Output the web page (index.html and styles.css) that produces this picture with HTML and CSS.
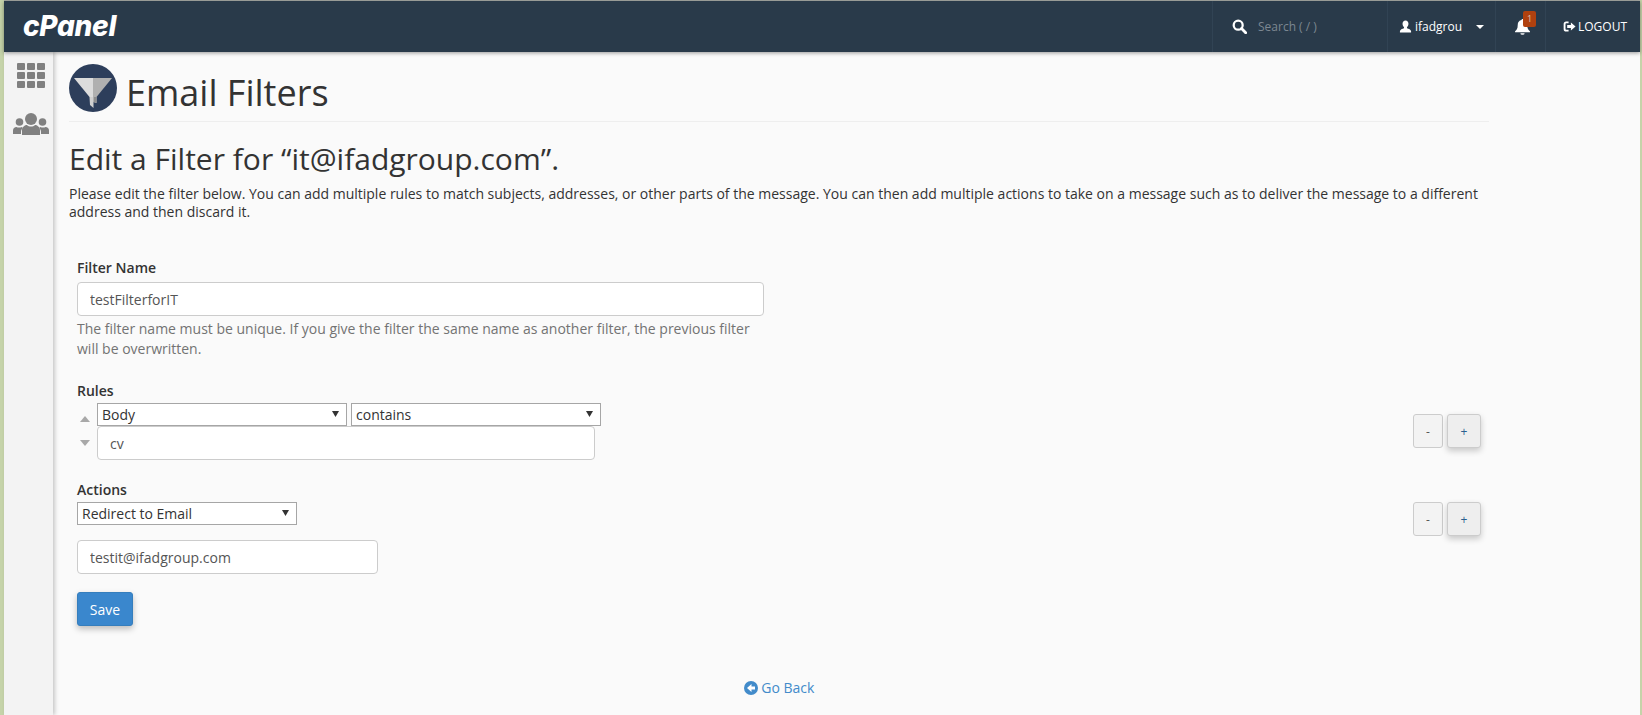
FILE: index.html
```html
<!DOCTYPE html>
<html lang="en">
<head>
    <meta charset="UTF-8">
    <meta name="viewport" content="width=device-width, initial-scale=1.0">
    <title>Email Filters</title>
    <link rel="stylesheet" href="styles.css">
</head>
<body>
    <div class="window">
        <header class="topbar">
            <a class="logo">cPanel</a>
            <div class="top-items">
                <div class="top-search">
                    <svg class="search-icon" viewBox="0 0 16 16"><circle cx="6.6" cy="6.6" r="4.8" fill="none" stroke="#fff" stroke-width="2.4"/><path d="M10.2 10.2 L14.6 14.6" stroke="#fff" stroke-width="3" stroke-linecap="round"/></svg>
                    <span class="search-text">Search ( / )</span>
                </div>
                <div class="top-user">
                    <svg class="user-icon" viewBox="0 0 14 14"><path d="M7 0.5c2 0 3.2 1.5 3.2 3.6 0 1.6-.7 3-1.6 3.7v1.1c1.8.7 4.4 1.4 4.4 3.2V13.500H1v-1.400c0-1.800 2.600-2.500 4.400-3.200V7.800C4.500 7.100 3.800 5.700 3.800 4.100 3.800 2 5 .5 7 .5z" fill="#fff"/></svg>
                    <span>ifadgrou</span>
                    <span class="caret"></span>
                </div>
                <div class="top-bell">
                    <svg class="bell-icon" viewBox="0 0 16 16"><path d="M8 1c.5 0 .9.400.9.900 2.300.400 3.600 2.200 3.600 4.600 0 3.500 1 4.800 2.500 6V13.500H1v-1c1.500-1.200 2.500-2.500 2.500-6 0-2.400 1.300-4.200 3.600-4.600C7.100 1.400 7.500 1 8 1z" fill="#fff"/><path d="M6 14.300h4a2 1.500 0 0 1-4 0z" fill="#fff"/></svg>
                    <span class="badge">1</span>
                </div>
                <div class="top-logout">
                    <svg class="logout-icon" viewBox="0 0 14 14"><path d="M6 2.500H3.500A1.800 1.800 0 0 0 1.700 4.300v5.400a1.800 1.800 0 0 0 1.800 1.800H6" fill="none" stroke="#fff" stroke-width="2"/><path d="M4.500 5.500H8.500V2.800L13.500 7 8.500 11.200V8.500H4.500z" fill="#fff"/></svg>
                    <span>LOGOUT</span>
                </div>
            </div>
        </header>

        <div class="columns">
            <nav class="sidebar">
                <svg class="grid-icon" viewBox="0 0 28 25">
                    <rect x="0" y="0" width="8" height="7" rx="1"/><rect x="10" y="0" width="8" height="7" rx="1"/><rect x="20" y="0" width="8" height="7" rx="1"/>
                    <rect x="0" y="9" width="8" height="7" rx="1"/><rect x="10" y="9" width="8" height="7" rx="1"/><rect x="20" y="9" width="8" height="7" rx="1"/>
                    <rect x="0" y="18" width="8" height="7" rx="1"/><rect x="10" y="18" width="8" height="7" rx="1"/><rect x="20" y="18" width="8" height="7" rx="1"/>
                </svg>
                <svg class="users-icon" viewBox="0 0 36 22">
                    <circle cx="18" cy="6" r="6"/><path d="M9 22v-5c0-3 3-5 5-5 1 1 2.500 1.500 4 1.500s3-.5 4-1.500c2 0 5 2 5 5v5z"/>
                    <circle cx="6.500" cy="9" r="3.800"/><path d="M0 21v-3.500c0-2 1.500-3.500 3.500-3.500 1 .8 4 .8 5 0 .5.300 1 .6 1.500 1-1.300 1-2 2.400-2 4V21z"/>
                    <circle cx="29.500" cy="9" r="3.800"/><path d="M36 21v-3.500c0-2-1.500-3.500-3.500-3.500-1 .8-4 .8-5 0-.5.300-1 .6-1.500 1 1.300 1 2 2.400 2 4V21z"/>
                </svg>
            </nav>

            <main class="content">
                <div class="page-head">
                    <svg class="filter-icon" viewBox="0 0 48 48">
                        <circle cx="24" cy="24" r="24" fill="#2d3e5b"/>
                        <path d="M5 14H24V33H20.500z" fill="#dcdcdc"/>
                        <path d="M43 14H24V33H27.500z" fill="#b0b0b0"/>
                        <path d="M20.500 33H27.500V39L24.500 38V44L21 41z" fill="#d0d0d0"/>
                        <path d="M24.500 33H27.500V39L24.500 38z" fill="#8d8d8d"/>
                    </svg>
                    <h1>Email Filters</h1>
                </div>

                <h2>Edit a Filter for “it@ifadgroup.com”.</h2>
                <p class="intro">Please edit the filter below. You can add multiple rules to match subjects, addresses, or other parts of the message. You can then add multiple actions to take on a message such as to deliver the message to a different address and then discard it.</p>

                <form class="filter-form">
                    <div class="field-name">
                        <label>Filter Name</label>
                        <input class="text-input" type="text" value="testFilterforIT">
                        <p class="help">The filter name must be unique. If you give the filter the same name as another filter, the previous filter will be overwritten.</p>
                    </div>

                    <label class="rules-label">Rules</label>
                    <div class="row">
                        <div class="rule">
                            <div class="arrows">
                                <span class="arrow-up"></span>
                                <span class="arrow-down"></span>
                            </div>
                            <div>
                                <div class="rule-selects">
                                    <select class="select-wide"><option>Body</option></select>
                                    <select class="select-wide"><option>contains</option></select>
                                </div>
                                <input class="text-input rule-input" type="text" value="cv">
                            </div>
                        </div>
                        <div class="buttons rule-buttons">
                            <button type="button" class="btn-minus">-</button>
                            <button type="button" class="btn-plus">+</button>
                        </div>
                    </div>

                    <label class="actions-label">Actions</label>
                    <div class="row">
                        <div>
                            <select class="select-action"><option>Redirect to Email</option></select>
                        </div>
                        <div class="buttons action-buttons">
                            <button type="button" class="btn-minus">-</button>
                            <button type="button" class="btn-plus">+</button>
                        </div>
                    </div>
                    <input class="text-input action-input" type="text" value="testit@ifadgroup.com">

                    <button type="button" class="btn-save">Save</button>
                </form>

                <div class="go-back">
                    <a>
                        <svg class="back-icon" viewBox="0 0 14 14"><circle cx="7" cy="7" r="7" fill="#428bca"/><path d="M7.500 3L3 7l4.500 4V8.500H11v-3H7.500z" fill="#fff"/></svg>
                        Go Back
                    </a>
                </div>
            </main>
        </div>
    </div>
</body>
</html>
```

FILE: styles.css
```css
html, body {
    height: 100%;
}

body {
    margin: 0;
    background-color: #c5d3a9;
    font-family: "Open Sans", sans-serif;
    font-size: 14px;
    color: #333333;
    overflow: hidden;
}

.window {
    margin: 0 2px 0 4px;
    height: 715px;
    border-top: 1px solid #a8aca6;
    box-sizing: border-box;
    display: flex;
    flex-direction: column;
    background-color: #fafafa;
}

/* top bar */
.topbar {
    height: 51px;
    flex: none;
    background-color: #293a4a;
    display: flex;
    justify-content: space-between;
    box-shadow: 0 1px 4px rgba(0, 0, 0, 0.4);
    position: relative;
    z-index: 2;
}

.logo {
    margin-left: 19px;
    font-family: "Inter", sans-serif;
    font-size: 28px;
    font-weight: 800;
    font-style: italic;
    letter-spacing: -0.3px;
    line-height: 50px;
    color: #ffffff;
}

.top-items {
    display: flex;
    color: #ffffff;
    font-size: 12px;
}

.top-items > div {
    display: flex;
    align-items: center;
    border-left: 1px solid #314354;
    box-sizing: border-box;
}

.top-search {
    width: 175px;
    padding-left: 19px;
}

.search-icon {
    width: 15px;
    height: 15px;
    margin-right: 11px;
}

.search-text {
    color: #7c8791;
}

.top-user {
    width: 108px;
    padding-left: 11px;
}

.user-icon {
    width: 13px;
    height: 13px;
    margin-right: 3px;
}

.caret {
    margin-left: 14px;
    border-top: 4px solid #ffffff;
    border-left: 4px solid transparent;
    border-right: 4px solid transparent;
}

.top-bell {
    width: 50px;
    padding-left: 18px;
    position: relative;
}

.bell-icon {
    width: 17px;
    height: 17px;
}

.badge {
    position: absolute;
    left: 27px;
    top: 10px;
    width: 13px;
    height: 16px;
    background-color: #b0410f;
    border-radius: 2px;
    font-size: 9px;
    line-height: 15px;
    text-align: center;
    color: #d9c4b8;
}

.top-logout {
    width: 95px;
    padding-left: 17px;
}

.logout-icon {
    width: 13px;
    height: 13px;
    margin-right: 2px;
}

/* sidebar and content */
.columns {
    flex: 1;
    display: flex;
    min-height: 0;
}

.sidebar {
    width: 49px;
    flex: none;
    background-color: #f3f3f3;
    box-shadow: 2px 0 4px rgba(0, 0, 0, 0.2);
    display: flex;
    flex-direction: column;
    align-items: center;
    padding: 11px 0 0 4px;
    box-sizing: border-box;
}

.grid-icon {
    width: 28px;
    height: 25px;
    fill: #808080;
}

.users-icon {
    width: 36px;
    height: 22px;
    margin-top: 25px;
    fill: #808080;
}

.content {
    width: 1420px;
    margin-left: 16px;
}

.page-head {
    display: flex;
    align-items: center;
    height: 69px;
    border-bottom: 1px solid #eeeeee;
}

.filter-icon {
    width: 48px;
    height: 48px;
    margin: 3px 9px 0 0;
}

h1 {
    margin: 12px 0 0;
    font-size: 36px;
    font-weight: 400;
    line-height: 44px;
}

h2 {
    margin: 17px 0 0;
    font-size: 30px;
    font-weight: 400;
    line-height: 40px;
}

.intro {
    margin: 6px 0 0;
    line-height: 18px;
}

.filter-form {
    padding: 0 8px;
    margin-top: 37px;
}

label {
    display: block;
    font-weight: 600;
    line-height: 20px;
}

.field-name {
    width: 687px;
}

.text-input {
    display: block;
    width: 100%;
    height: 34px;
    box-sizing: border-box;
    padding: 6px 12px;
    border: 1px solid #cccccc;
    border-radius: 4px;
    background-color: #ffffff;
    font-family: "Open Sans", sans-serif;
    font-size: 14px;
    color: #555555;
}

.field-name label {
    margin-bottom: 4px;
}

.help {
    margin: 3px 0 0;
    line-height: 20px;
    color: #737373;
}

.rules-label {
    margin-top: 22px;
    margin-bottom: 2px;
}

.row {
    display: flex;
    justify-content: space-between;
}

.rule {
    display: flex;
}

.arrows {
    width: 20px;
    padding-top: 13px;
    display: flex;
    flex-direction: column;
}

.arrow-up {
    width: 0;
    border-bottom: 6px solid #a8a8a8;
    border-left: 5px solid transparent;
    border-right: 5px solid transparent;
    margin-left: 3px;
}

.arrow-down {
    width: 0;
    margin-top: 18px;
    border-top: 6px solid #a8a8a8;
    border-left: 5px solid transparent;
    border-right: 5px solid transparent;
    margin-left: 3px;
}

select {
    display: block;
    height: 23px;
    box-sizing: border-box;
    padding: 0 0 0 4px;
    border: 1px solid #a6a6a6;
    border-radius: 0;
    appearance: none;
    background: #ffffff url("data:image/svg+xml,%3Csvg xmlns='http://www.w3.org/2000/svg' width='7' height='6'%3E%3Cpath d='M0 0H7L3.500 6z' fill='%23333333'/%3E%3C/svg%3E") no-repeat right 7px top 7px;
    font-family: "Open Sans", sans-serif;
    font-size: 14px;
    color: #333333;
}

.rule-selects {
    display: flex;
    gap: 4px;
}

.select-wide {
    width: 250px;
}

.rule-input {
    width: 498px;
    margin-top: 0;
}

.actions-label {
    margin-top: 20px;
    margin-bottom: 2px;
}

.select-action {
    width: 220px;
}

.buttons {
    display: flex;
    gap: 4px;
}

.rule-buttons {
    padding-top: 11px;
}

.buttons button {
    height: 34px;
    padding: 0;
    border: 1px solid #cccccc;
    border-radius: 3px;
    font-family: "Open Sans", sans-serif;
    font-size: 12px;
    color: #555555;
}

.btn-minus {
    width: 30px;
    background-color: #f3f3f3;
}

.buttons .btn-plus {
    width: 34px;
    background-color: #eeeeee;
    color: #2a5f8f;
    box-shadow: 0 3px 6px rgba(0, 0, 0, 0.2);
}

.action-input {
    width: 301px;
    margin-top: 4px;
}

.btn-save {
    display: block;
    margin-top: 18px;
    width: 56px;
    height: 34px;
    padding: 0;
    border: 1px solid #357ebd;
    border-radius: 3px;
    background-color: #3a87cd;
    box-shadow: 0 3px 6px rgba(0, 0, 0, 0.25);
    font-family: "Open Sans", sans-serif;
    font-size: 14px;
    color: #ffffff;
}

.go-back {
    margin-top: 52px;
    text-align: center;
    color: #428bca;
}

.back-icon {
    width: 14px;
    height: 14px;
    vertical-align: -2px;
}
```
